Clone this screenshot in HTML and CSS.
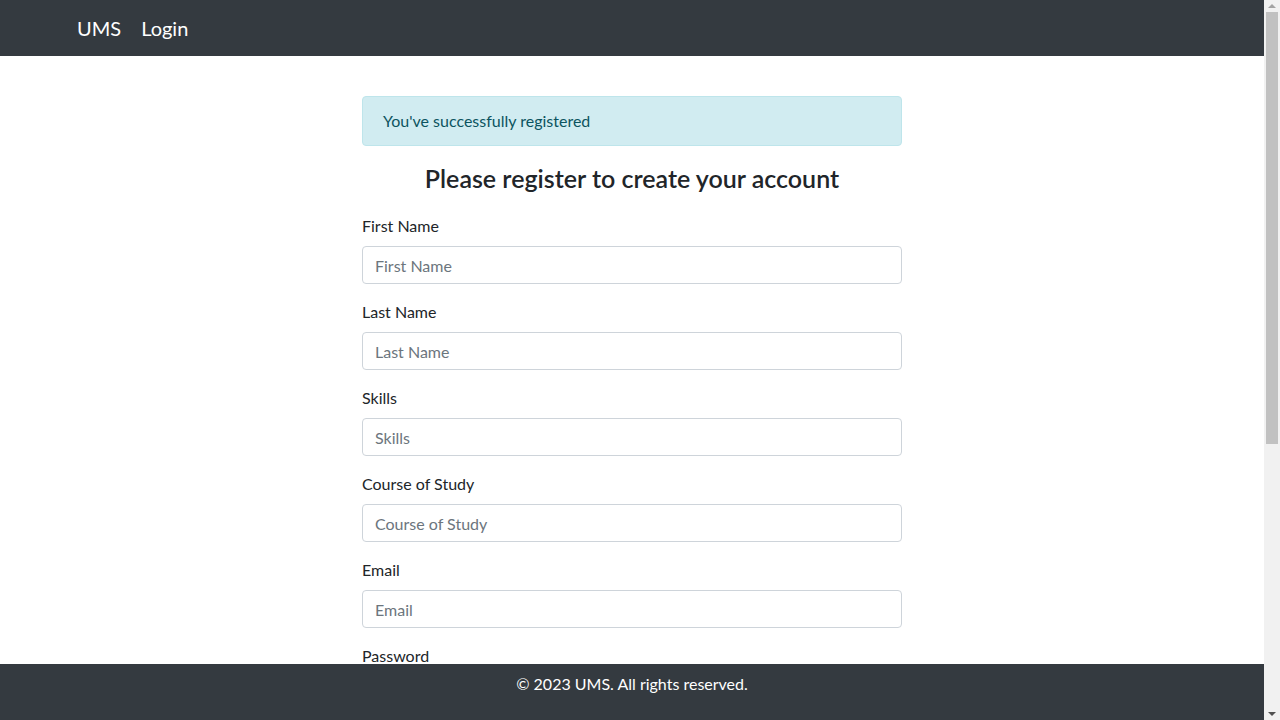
FILE: index.html
```html
<!DOCTYPE html>
<html lang="en">
<head>
<meta charset="utf-8">
<title>UMS - Register</title>
<link rel="stylesheet" href="styles.css">
</head>
<body>
<div class="page">
  <nav class="navbar">
    <div class="container nav-inner">
      <a class="brand" href="#">UMS</a>
      <a class="nav-link" href="#">Login</a>
    </div>
  </nav>
  <main class="container main">
    <div class="col">
      <div class="alert">You've successfully registered</div>
      <h3 class="title">Please register to create your account</h3>
      <form class="form">
        <div class="group">
          <label class="label" for="fn">First Name</label>
          <input class="input" id="fn" type="text" placeholder="First Name">
        </div>
        <div class="group">
          <label class="label" for="ln">Last Name</label>
          <input class="input" id="ln" type="text" placeholder="Last Name">
        </div>
        <div class="group">
          <label class="label" for="sk">Skills</label>
          <input class="input" id="sk" type="text" placeholder="Skills">
        </div>
        <div class="group">
          <label class="label" for="cs">Course of Study</label>
          <input class="input" id="cs" type="text" placeholder="Course of Study">
        </div>
        <div class="group">
          <label class="label" for="em">Email</label>
          <input class="input" id="em" type="email" placeholder="Email">
        </div>
        <div class="group">
          <label class="label" for="pw">Password</label>
          <input class="input" id="pw" type="password" placeholder="Password">
        </div>
        <button class="btn" type="button">Register</button>
      </form>
    </div>
  </main>
  <footer class="footer">
    <p class="footer-text">&copy; 2023 UMS. All rights reserved.</p>
  </footer>
</div>
<div class="scrollbar" aria-hidden="true">
  <div class="sb-arrow sb-up"></div>
  <div class="sb-track"><div class="sb-thumb"></div></div>
  <div class="sb-arrow sb-down"></div>
</div>
</body>
</html>
```
FILE: styles.css
```css
* { box-sizing: border-box; }
html, body { margin: 0; height: 100%; overflow: hidden; }
body {
  font-family: "Lato", "Noto Sans", sans-serif;
  font-size: 16px;
  line-height: 1.5;
  color: #212529;
  background: #fff;
  display: grid;
  grid-template-columns: 1fr 16px;
}
.page {
  position: relative;
  height: 100%;
  overflow: hidden;
}
.container {
  max-width: 1140px;
  margin: 0 auto;
  padding: 0 15px;
}
.navbar {
  background: #343a40;
  height: 56px;
  padding: 8px 0;
}
.nav-inner {
  display: flex;
  align-items: center;
  height: 40px;
}
.brand, .nav-link {
  color: #fff;
  text-decoration: none;
  font-size: 20px;
  line-height: 30px;
}
.brand { margin-right: 20px; }
.main {
  padding-top: 40px;
  padding-bottom: 120px;
}
.col {
  width: 540px;
  margin: 0 auto;
}
.alert {
  background: #d1ecf1;
  border: 1px solid #bee5eb;
  color: #0c5460;
  border-radius: 4px;
  padding: 12px 20px;
  margin-bottom: 16px;
}
.title {
  font-size: 25px;
  font-weight: 600;
  line-height: 33px;
  text-align: center;
  margin: 0 0 19px;
}
.group { margin-bottom: 16px; }
.label {
  display: block;
  margin-bottom: 8px;
}
.input {
  display: block;
  width: 100%;
  height: 38px;
  padding: 6px 12px;
  font: inherit;
  color: #495057;
  border: 1px solid #ced4da;
  border-radius: 4px;
  background: #fff;
}
.input::placeholder { color: #6c757d; opacity: 1; }
.btn {
  font: inherit;
  color: #fff;
  background: #007bff;
  border: 1px solid #007bff;
  border-radius: 4px;
  padding: 6px 12px;
}
.footer {
  position: absolute;
  left: 0;
  right: 0;
  bottom: 0;
  height: 56px;
  background: #343a40;
  color: #fff;
  text-align: center;
  padding: 8px 0;
}
.footer-text { margin: 0; }
.scrollbar {
  background: #f1f1f1;
  display: flex;
  flex-direction: column;
  height: 100%;
}
.sb-arrow {
  height: 12px;
  flex: none;
  display: flex;
  justify-content: center;
  align-items: center;
}
.sb-up::before {
  content: "";
  border-left: 4px solid transparent;
  border-right: 4px solid transparent;
  border-bottom: 4px solid #a3a3a3;
}
.sb-down::before {
  content: "";
  border-left: 4px solid transparent;
  border-right: 4px solid transparent;
  border-top: 4px solid #505050;
}
.sb-track {
  flex: 1;
  padding: 0 2px;
}
.sb-thumb {
  height: 432px;
  background: #c1c1c1;
}
```
